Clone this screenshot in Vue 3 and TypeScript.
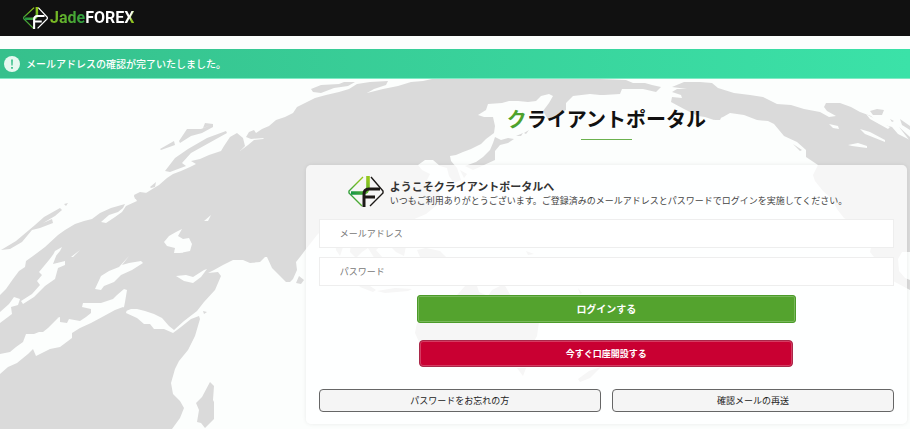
<script setup lang="ts">
import { ref } from 'vue'

const email = ref('')
const password = ref('')
</script>

<template>
  <div class="page">
    <header class="header">
      <a class="brand" href="#" aria-label="JadeFOREX">
        <svg class="brand-mark" viewBox="0 0 36 32" aria-hidden="true">
          <defs>
            <linearGradient id="mark-head" x1="0" y1="1" x2="1" y2="0">
              <stop offset="0" stop-color="#1f9545" />
              <stop offset="1" stop-color="#9acb16" />
            </linearGradient>
          </defs>
          <g fill="none">
            <path d="M16 1 L1 15 V17 L15 31" stroke="url(#mark-head)" stroke-width="1.8" />
            <path d="M22 1 L35 15 V17 L21 31" stroke="#fff" stroke-width="1.8" />
            <path d="M20 0 V11 Q20 17 14 17 H3" stroke="url(#mark-head)" stroke-width="3.6" />
            <path d="M31 13 H21 Q16 13 16 18 V32 M17 21 H27" stroke="#fff" stroke-width="3" />
          </g>
        </svg>
        <span class="brand-name"><span class="brand-jade">Jade</span><span class="brand-forex">FOREX</span></span>
      </a>
    </header>

    <div class="notice" role="status">
      <svg class="notice-icon" viewBox="0 0 16 16" aria-hidden="true">
        <circle cx="8" cy="8" r="8" fill="#e6f8f0" />
        <path d="M7 3.5 H9 L8.7 9.5 H7.3 Z M7 11 H9 V12.8 H7 Z" fill="#4cc595" />
      </svg>
      <span>メールアドレスの確認が完了いたしました。</span>
    </div>

    <main class="main">
      <svg class="map" viewBox="0 79 910 350" preserveAspectRatio="xMinYMin slice" aria-hidden="true">
        <g fill="#dadada">
          <!-- Europe and Asia -->
          <path d="M0 295 L6 289 13 279 19 271 25 267 26 261 33 256 45 247 58 235 65 230 75 224 84 221 92 219 100 213 111 208 125 204 123 208 118 212 109 215 101 222 106 223 115 217 122 212 126 206 137 201 134 196 142 194 146 193 154 188 159 185 167 178 173 174 181 171 190 167 196 164 191 161 200 159 209 155 221 151 224 146 230 137 237 133 243 138 245 146 240 151 248 145 254 140 263 139 264 138 251 139 246 137 249 132 254 130 256 133 262 129 269 126 276 120 285 117 293 113 297 107 305 103 315 98 326 95 339 92 349 89 357 84 370 82 388 81 386 85 374 89 367 93 383 89 398 86 411 82 423 81 432 79 H600 L626 80 633 83 645 83 652 85 661 87 656 92 643 89 635 89 622 89 620 94 604 95 600 95 590 94 573 96 566 103 566 110 557 115 549 121 543 111 549 103 553 96 549 94 541 96 536 101 528 102 518 101 509 101 502 103 488 104 486 110 478 115 484 117 493 117 495 126 494 133 486 139 481 144 471 149 463 152 456 155 450 156 451 161 457 168 461 180 454 183 449 176 447 168 440 166 433 160 425 160 418 165 422 170 430 174 427 180 436 187 440 195 437 205 426 214 412 220 402 228 403 238 406 246 404 256 396 252 390 246 383 244 376 250 383 258 380 266 373 256 368 248 362 252 356 258 350 252 351 242 344 236 343 247 340 256 336 250 335 240 329 233 321 231 317 235 310 244 306 249 300 257 296 262 297 270 293 279 290 282 286 282 280 276 272 268 267 257 265 257 260 262 250 263 243 260 233 260 223 265 214 270 208 273 218 272 221 276 215 290 204 302 197 311 184 321 174 330 169 326 162 318 154 314 145 311 137 309 131 309 126 311 123 312 125 302 127 290 124 289 117 295 113 299 101 303 90 303 83 303 82 307 91 309 91 313 86 317 80 321 69 319 67 323 60 322 60 317 49 321 36 324 36 320 45 318 56 316 61 315 57 319 48 328 43 332 39 332 34 334 26 334 23 342 16 347 10 352 0 354 Z" />
          <!-- Africa and Madagascar -->
          <path d="M0 374 L8 367 17 363 28 354 33 349 36 356 50 349 60 347 72 338 72 333 80 328 91 323 104 316 115 310 123 307 127 309 126 313 137 318 144 324 150 324 154 329 164 329 173 333 181 327 191 319 199 316 200 319 195 336 188 350 179 361 175 369 171 383 173 394 180 401 184 408 180 418 172 429 V440 H0Z" />
          <path d="M210 382 L214 386 213 400 214 402 214 419 205 428 201 423 197 422 199 410 196 403 202 397 Z" />
          <path d="M203 311 L207 312 204 314Z M299 276 L304 280 301 284 296 283Z" />
          <!-- Arctic islands -->
          <path d="M1 250 L16 241 35 225 44 217 60 208 62 210 55 216 43 223 52 219 53 223 40 228 32 230 22 242 10 249Z M64 204 L68 203 66 206Z M165 171 L175 158 188 149 207 138 226 131 227 133 209 143 191 153 182 163 186 166 170 172Z M160 149 L174 141 175 145 161 150Z M179 141 L187 129 195 129 201 129 211 125 203 128 205 123 213 124 213 127 202 133 191 136 180 143Z M150 187 L156 182 155 187 151 188Z M311 89 L321 85 339 84 344 82 355 82 348 86 334 88 321 93 313 92Z" />
          <path d="M134 195 L140 192 147 193 141 197 135 199Z" />
          <!-- Japan and the Kuril islands -->
          <path d="M495 137 L501 140 508 138 514 139 508 143 500 145 495 151 495 160 484 165 473 170 465 166 476 162 483 157 490 150 493 143Z M516 136 L523 133 521 136Z M524 133 L529 130 526 134Z M460 170 L467 174 464 178Z" />
          <!-- North and Central America -->
          <path d="M672 87 L684 82 700 82 712 83 718 88 734 93 750 95 763 97 777 104 791 105 804 109 820 112 829 117 836 116 827 111 824 107 826 103 840 103 851 107 860 112 871 116 878 123 892 127 898 134 910 140 V252 L902 252 898 259 899 271 905 278 910 280 V290 L895 282 884 275 878 262 870 252 872 244 864 230 852 223 844 218 837 209 832 199 823 191 815 181 813 175 818 165 806 157 806 150 797 142 784 136 774 124 768 121 757 120 744 115 730 113 723 117 714 120 705 117 698 116 684 109 671 102 672 97 682 98 681 95 672 92 677 89 687 89Z" />
          <path d="M870 111 L877 109 884 110 882 115 873 115Z M890 119 L894 121 892 122Z M900 119 L910 126 910 130 902 125Z M899 127 L910 137 910 141Z M713 117 L722 116 720 120 715 120Z M793 144 L802 150 800 151Z" />
          <!-- Indonesia, Australia and New Zealand -->
          <path d="M355 280 L370 286 376 290 373 292 360 287Z M377 291 L395 288 412 289 408 291 385 293Z M420 281 L430 277 426 285Z M417 250 L426 248 440 251 447 258 420 257Z M526 251 L534 254 528 255Z M578 288 L582 293 580 294Z M417 323 L431 313 445 307 458 294 465 286 477 286 479 292 488 296 492 290 504 284 512 298 524 311 539 322 537 336 533 343 523 354 510 360 495 355 482 347 459 340 420 344 415 333Z M517 368 L526 368 523 376Z M578 379 L589 371 601 367 590 378 580 382Z" />
        </g>
        <g fill="#fcfefd">
          <path d="M164 242 L169 236 176 232 182 229 178 236 183 239 189 238 192 244 190 251 180 253 174 253 175 248 167 246Z M204 221 L211 215 208 221Z M52 257 L55 251 62 247 60 251 55 257Z M71 257 L80 250 73 257Z M39 272 L49 260 55 252 58 251 53 264 65 261 65 265 58 268 55 279 45 286 34 297 23 304 21 301 32 294 40 285 37 281 42 275Z M95 289 L101 276 109 271 119 267 129 256 122 265 129 263 141 261 143 263 132 270 121 275 114 282 104 286 101 290Z M176 276 L186 275 193 277 204 270 207 269 201 277 193 283 184 281Z M174 250 H188 L182 253Z M0 312 L9 304 14 297 20 299 18 305 11 307 12 314 0 323Z" />
          <path d="M829 124 L838 126 839 129 833 128Z M860 129 L870 132 885 140 885 142 865 134Z M848 145 L858 143 867 146 867 148 852 146Z M866 114 L890 127 888 129 870 119Z" />
        </g>
      </svg>

      <section class="portal">
        <h1 class="title"><span class="title-initial">ク</span>ライアントポータル</h1>
        <div class="rule"></div>

        <form class="card" @submit.prevent>
          <div class="welcome">
            <svg class="welcome-mark" viewBox="0 0 36 32" aria-hidden="true">
              <defs>
                <linearGradient id="mark-card" x1="0" y1="1" x2="1" y2="0">
                  <stop offset="0" stop-color="#149447" />
                  <stop offset="0.9" stop-color="#93c71c" />
                </linearGradient>
              </defs>
              <g fill="none">
                <path d="M15 1 L1 15 V17 L14 30" stroke="url(#mark-card)" stroke-width="1.4" />
                <path d="M23 1 L35 15 V17 L22 30" stroke="#1c1917" stroke-width="1.4" />
                <path d="M20 0 V11 Q20 17 14 17 H3" stroke="url(#mark-card)" stroke-width="3.6" />
                <path d="M32 13 H21 Q16 13 16 18 V31 M17 21 H27" stroke="#1c1917" stroke-width="3" />
              </g>
            </svg>
            <div>
              <h2 class="welcome-title">ようこそクライアントポータルへ</h2>
              <p class="welcome-text">いつもご利用ありがとうございます。ご登録済みのメールアドレスとパスワードでログインを実施してください。</p>
            </div>
          </div>

          <div class="fields">
            <input v-model="email" class="field" type="email" placeholder="メールアドレス" aria-label="メールアドレス" />
            <input v-model="password" class="field" type="password" placeholder="パスワード" aria-label="パスワード" />
          </div>

          <button class="button login" type="submit">ログインする</button>
          <button class="button register" type="button">今すぐ口座開設する</button>

          <div class="links">
            <button class="button plain" type="button">パスワードをお忘れの方</button>
            <button class="button plain" type="button">確認メールの再送</button>
          </div>
        </form>
      </section>
    </main>
  </div>
</template>

<style>
body {
  margin: 0;
  background: #fcfefd;
}
</style>

<style scoped>
.page {
  display: flex;
  flex-direction: column;
  min-height: 100vh;
  overflow: hidden;
  font-family: "Noto Sans CJK JP", sans-serif;
  color: #444;
}
.page * {
  box-sizing: border-box;
}
.header {
  display: flex;
  align-items: center;
  height: 36px;
  padding: 0 23px;
  background: #111;
}
.brand {
  display: flex;
  align-items: center;
  gap: 2px;
  text-decoration: none;
}
.brand-mark {
  width: 25px;
  height: 24px;
}
.brand-name {
  font: 700 16px/24px Roboto, sans-serif;
}
.brand-jade {
  color: transparent;
  background: linear-gradient(90deg, #83bd20, #2c9d40);
  background-clip: text;
}
.brand-forex {
  color: transparent;
  background: linear-gradient(115deg, #fff 84%, #8fc31f 90%);
  background-clip: text;
}
.notice {
  display: flex;
  align-items: center;
  gap: 6px;
  height: 30px;
  margin-top: 13px;
  padding: 0 4px;
  border-bottom: 1px solid #80ebc5;
  background: linear-gradient(90deg, #36c08c, #3be2a8);
  color: #fff;
  font-size: 10px;
  font-weight: 500;
}
.notice-icon {
  width: 16px;
  height: 16px;
}
.main {
  position: relative;
  flex: 1;
  padding: 26px 3px 4px 33.6%;
}
.map {
  position: absolute;
  inset: 0;
  width: 100%;
  height: 100%;
}
.portal {
  position: relative;
}
.title {
  margin: 0;
  color: #111;
  font-size: 20px;
  font-weight: 700;
  line-height: 28px;
  text-align: center;
}
.title-initial {
  color: #4ea22d;
}
.rule {
  width: 51px;
  height: 1px;
  margin: 6px auto 25px;
  background: #6bb14e;
}
.card {
  display: flex;
  flex-direction: column;
  align-items: center;
  padding: 12px 13px;
  border-radius: 5px;
  background: rgb(255 255 255 / 74%);
  box-shadow: 0 0 4px rgb(0 0 0 / 8%);
}
.welcome {
  display: flex;
  align-items: center;
  align-self: stretch;
  gap: 6px;
  height: 30px;
  margin: 0 0 12px;
  padding-left: 29px;
}
.welcome-mark {
  flex: none;
  width: 36px;
  height: 32px;
}
.welcome-title {
  margin: 0;
  color: #333;
  font-size: 11px;
  font-weight: 700;
  line-height: 16px;
}
.welcome-text {
  margin: 0;
  font-size: 9px;
  line-height: 13px;
}
.fields {
  display: flex;
  flex-direction: column;
  align-self: stretch;
  gap: 9px;
}
.field {
  width: 100%;
  height: 29px;
  padding: 0 20px;
  border: 1px solid #eee;
  background: #fff;
  color: #333;
  font: 400 9px/14px "Noto Sans CJK JP", sans-serif;
}
.field::placeholder {
  color: #777;
  opacity: 1;
}
.button {
  padding: 0;
  font: 700 9px/14px "Noto Sans CJK JP", sans-serif;
  cursor: pointer;
}
.login {
  width: 66%;
  height: 28px;
  margin-top: 9px;
  border: 1px solid #4b9b29;
  border-radius: 3px;
  background: #54a32e;
  box-shadow: inset 0 0 0 1px #79b85b;
  color: #fff;
  font-size: 10px;
}
.register {
  width: 65%;
  height: 27px;
  margin-top: 17px;
  border: 1px solid #a92849;
  border-radius: 4px;
  background: #c90032;
  box-shadow: inset 0 0 0 1px #d63b62;
  color: #fff;
}
.links {
  display: flex;
  align-self: stretch;
  gap: 11px;
  margin-top: 22px;
}
.plain {
  flex: 1;
  height: 23px;
  border: 1px solid #666;
  border-radius: 4px;
  background: #f5f5f5;
  color: #222;
  font-weight: 400;
}
</style>
